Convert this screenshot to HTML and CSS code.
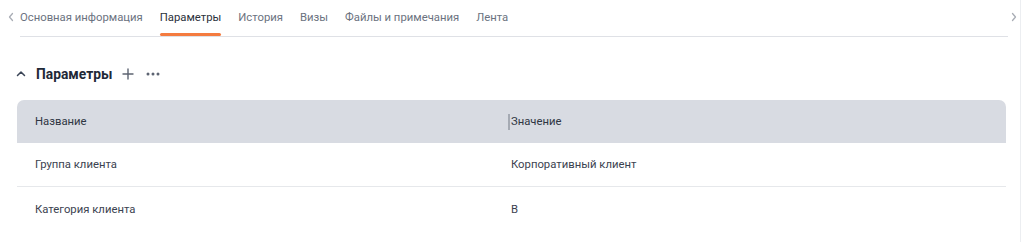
FILE: index.html
```html
<!DOCTYPE html>
<html lang="ru">
<head>
<meta charset="utf-8">
<link rel="stylesheet" href="styles.css">
</head>
<body>
<div class="page">
  <div class="tabbar">
    <span class="nav nav-left">
      <svg width="8" height="10" viewBox="0 0 8 10"><path d="M5.5 1.5 L2.5 5 L5.5 8.5" fill="none" stroke="#a9adb5" stroke-width="1.3" stroke-linecap="round" stroke-linejoin="round"/></svg>
    </span>
    <div class="tabs">
      <span class="tab">Основная информация</span>
      <span class="tab active">Параметры</span>
      <span class="tab">История</span>
      <span class="tab">Визы</span>
      <span class="tab">Файлы и примечания</span>
      <span class="tab">Лента</span>
    </div>
    <span class="nav nav-right">
      <svg width="8" height="10" viewBox="0 0 8 10"><path d="M2.5 1.5 L5.5 5 L2.5 8.5" fill="none" stroke="#a9adb5" stroke-width="1.3" stroke-linecap="round" stroke-linejoin="round"/></svg>
    </span>
  </div>

  <div class="section-head">
    <svg class="caret" width="10" height="8" viewBox="0 0 10 8"><path d="M1.5 5.5 L5 2 L8.5 5.5" fill="none" stroke="#3a4456" stroke-width="1.5" stroke-linecap="round" stroke-linejoin="round"/></svg>
    <span class="title">Параметры</span>
    <svg class="plus" width="12" height="12" viewBox="0 0 12 12"><path d="M6 1 V11 M1 6 H11" stroke="#5d6472" stroke-width="1.4" stroke-linecap="round"/></svg>
    <svg class="dots" width="14" height="4" viewBox="0 0 14 4"><circle cx="2" cy="2" r="1.5" fill="#5d6472"/><circle cx="7" cy="2" r="1.5" fill="#5d6472"/><circle cx="12" cy="2" r="1.5" fill="#5d6472"/></svg>
  </div>

  <div class="table">
    <div class="row head">
      <div class="cell">Название</div>
      <div class="cell second"><span class="divider"></span>Значение</div>
    </div>
    <div class="row">
      <div class="cell">Группа клиента</div>
      <div class="cell second">Корпоративный клиент</div>
    </div>
    <div class="row last">
      <div class="cell">Категория клиента</div>
      <div class="cell second">В</div>
    </div>
  </div>
</div>
</body>
</html>
```

FILE: styles.css
```css
* { box-sizing: border-box; }
html, body { margin: 0; padding: 0; background: #ffffff; }
body {
  font-family: Roboto, "Noto Sans", Arial, sans-serif;
  color: #333a44;
  width: 1024px;
  height: 242px;
  overflow: hidden;
}
.page {
  width: 1021px;
  height: 242px;
  border-right: 1px solid #eceef1;
}
.tabbar {
  display: flex;
  align-items: flex-start;
  height: 37px;
  padding-left: 5px;
}
.nav {
  display: flex;
  align-items: center;
  justify-content: center;
  width: 12px;
  height: 34px;
}
.nav-left { margin-right: 3px; }
.nav-right { margin-left: 0; }
.tabs {
  display: flex;
  gap: 17px;
  flex: 1;
  height: 37px;
  border-bottom: 1px solid #dfe1e6;
}
.tab {
  font-size: 11.3px;
  color: #6b7280;
  line-height: 35px;
  height: 36px;
  white-space: nowrap;
  position: relative;
}
.tab.active { color: #2b313b; }
.tab.active::after {
  content: "";
  position: absolute;
  left: 0;
  right: 0;
  bottom: 0;
  height: 3px;
  border-radius: 2px;
  background: #f47b3f;
}
.section-head {
  display: flex;
  align-items: center;
  height: 24px;
  margin-top: 25px;
  padding-left: 16px;
}
.caret { margin-right: 10px; }
.title {
  font-size: 13.8px;
  font-weight: 700;
  color: #1f2937;
  margin-right: 10px;
}
.plus { margin-right: 12px; }
.table {
  margin: 14px 0 0 17px;
  width: 989px;
}
.row {
  display: flex;
  height: 44px;
  align-items: center;
  border-bottom: 1px solid #e6e8eb;
  font-size: 11.3px;
  color: #3b4250;
}
.row.head {
  height: 43px;
  background: #d8dbe2;
  border-bottom: none;
  border-radius: 7px 7px 0 0;
  color: #2f3642;
}
.row.last { border-bottom: none; }
.cell {
  width: 491px;
  padding-left: 18px;
  white-space: nowrap;
}
.cell.second {
  display: flex;
  align-items: center;
  padding-left: 3px;
}
.row.head .cell.second { padding-left: 0; }
.divider {
  display: inline-block;
  width: 2px;
  height: 16px;
  background: #a5aab3;
  margin-right: 1px;
}
```
